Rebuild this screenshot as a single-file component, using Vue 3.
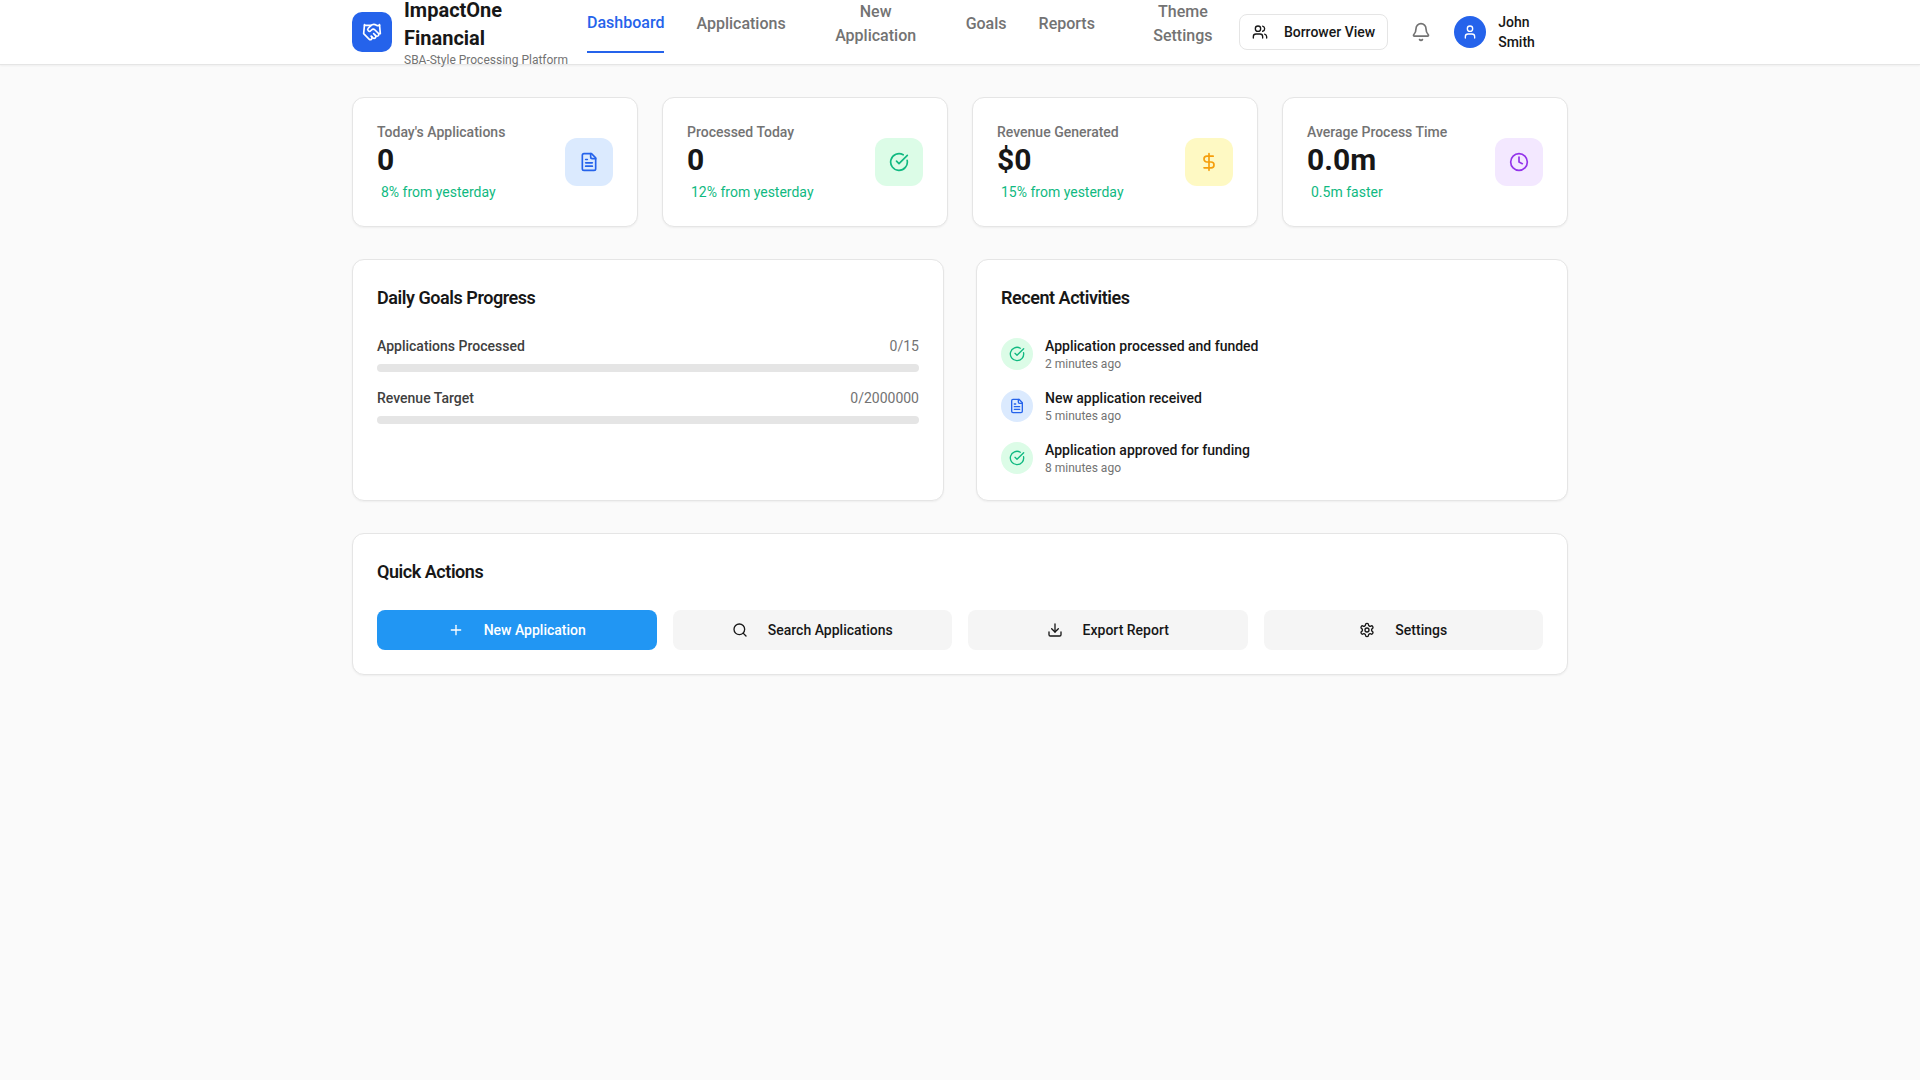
<script setup>
const navItems = [
  { label: 'Dashboard', active: true },
  { label: 'Applications' },
  { label: 'New Application', w: 116 },
  { label: 'Goals' },
  { label: 'Reports' },
  { label: 'Theme Settings', w: 112 }
]
const stats = [
  { label: "Today's Applications", value: '0', delta: '8% from yesterday', tone: 'blue', icon: 'file' },
  { label: 'Processed Today', value: '0', delta: '12% from yesterday', tone: 'green', icon: 'check' },
  { label: 'Revenue Generated', value: '$0', delta: '15% from yesterday', tone: 'yellow', icon: 'dollar' },
  { label: 'Average Process Time', value: '0.0m', delta: '0.5m faster', tone: 'purple', icon: 'clock' }
]
const goals = [
  { label: 'Applications Processed', value: '0/15' },
  { label: 'Revenue Target', value: '0/2000000' }
]
const activities = [
  { title: 'Application processed and funded', time: '2 minutes ago', tone: 'green', icon: 'check' },
  { title: 'New application received', time: '5 minutes ago', tone: 'blue', icon: 'file' },
  { title: 'Application approved for funding', time: '8 minutes ago', tone: 'green', icon: 'check' }
]
const actions = [
  { label: 'New Application', icon: 'plus', primary: true },
  { label: 'Search Applications', icon: 'search' },
  { label: 'Export Report', icon: 'download' },
  { label: 'Settings', icon: 'settings' }
]
const paths = {
  file: ['M15 2H6a2 2 0 0 0-2 2v16a2 2 0 0 0 2 2h12a2 2 0 0 0 2-2V7Z', 'M14 2v4a2 2 0 0 0 2 2h4', 'M10 9H8', 'M16 13H8', 'M16 17H8'],
  check: ['M21.801 10A10 10 0 1 1 17 3.335', 'm9 11 3 3L22 4'],
  dollar: ['M12 2v20', 'M17 5H9.5a3.5 3.5 0 0 0 0 7h5a3.5 3.5 0 0 1 0 7H6'],
  clock: ['M12 22a10 10 0 1 0 0-20 10 10 0 0 0 0 20Z', 'M12 6v6l4 2'],
  plus: ['M5 12h14', 'M12 5v14'],
  search: ['m21 21-4.34-4.34', 'M11 19a8 8 0 1 0 0-16 8 8 0 0 0 0 16Z'],
  download: ['M12 15V3', 'M21 15v4a2 2 0 0 1-2 2H5a2 2 0 0 1-2-2v-4', 'm7 10 5 5 5-5'],
  settings: ['M12.22 2h-.44a2 2 0 0 0-2 2v.18a2 2 0 0 1-1 1.73l-.43.25a2 2 0 0 1-2 0l-.15-.08a2 2 0 0 0-2.73.73l-.22.38a2 2 0 0 0 .73 2.73l.15.1a2 2 0 0 1 1 1.72v.51a2 2 0 0 1-1 1.74l-.15.09a2 2 0 0 0-.73 2.73l.22.38a2 2 0 0 0 2.73.73l.15-.08a2 2 0 0 1 2 0l.43.25a2 2 0 0 1 1 1.73V20a2 2 0 0 0 2 2h.44a2 2 0 0 0 2-2v-.18a2 2 0 0 1 1-1.73l.43-.25a2 2 0 0 1 2 0l.15.08a2 2 0 0 0 2.73-.73l.22-.39a2 2 0 0 0-.73-2.73l-.15-.08a2 2 0 0 1-1-1.74v-.5a2 2 0 0 1 1-1.74l.15-.09a2 2 0 0 0 .73-2.73l-.22-.38a2 2 0 0 0-2.73-.73l-.15.08a2 2 0 0 1-2 0l-.43-.25a2 2 0 0 1-1-1.73V4a2 2 0 0 0-2-2Z', 'M12 15a3 3 0 1 0 0-6 3 3 0 0 0 0 6Z'],
  users: ['M16 21v-2a4 4 0 0 0-4-4H6a4 4 0 0 0-4 4v2', 'M16 3.128a4 4 0 0 1 0 7.744', 'M22 21v-2a4 4 0 0 0-3-3.87', 'M9 11a4 4 0 1 0 0-8 4 4 0 0 0 0 8Z'],
  bell: ['M10.268 21a2 2 0 0 0 3.464 0', 'M3.262 15.326A1 1 0 0 0 4 17h16a1 1 0 0 0 .74-1.673C19.41 13.956 18 12.499 18 8A6 6 0 0 0 6 8c0 4.499-1.411 5.956-2.738 7.326'],
  user: ['M19 21v-2a4 4 0 0 0-4-4H9a4 4 0 0 0-4 4v2', 'M12 11a4 4 0 1 0 0-8 4 4 0 0 0 0 8Z'],
  logo: ['m11 17 2 2a1 1 0 1 0 3-3', 'm14 14 2.5 2.5a1 1 0 1 0 3-3l-3.88-3.88a3 3 0 0 0-4.24 0l-.88.88a1 1 0 1 1-3-3l2.81-2.81a5.79 5.79 0 0 1 7.06-.87l.47.28a2 2 0 0 0 1.42.25L21 4', 'm21 3 1 11h-2', 'M3 3 2 14l6.5 6.5a1 1 0 1 0 3-3', 'M3 4h8']
}
</script>

<template>
  <div class="page">
    <header class="topbar">
      <div class="topbar-inner">
        <div class="brand">
          <span class="logo">
            <svg class="ic20" viewBox="0 0 24 24"><path v-for="d in paths.logo" :key="d" :d="d" /></svg>
          </span>
          <div class="brand-text">
            <div class="brand-name">ImpactOne Financial</div>
            <div class="brand-sub">SBA-Style Processing Platform</div>
          </div>
        </div>
        <nav class="nav">
          <div
            v-for="item in navItems"
            :key="item.label"
            class="nav-item"
            :class="{ active: item.active }"
            :style="item.w ? { width: item.w + 'px' } : null"
          >{{ item.label }}</div>
        </nav>
        <div class="tools">
          <div class="borrower">
            <svg class="ic16" viewBox="0 0 24 24"><path v-for="d in paths.users" :key="d" :d="d" /></svg>
            <span>Borrower View</span>
          </div>
          <div class="bell">
            <svg class="ic20" viewBox="0 0 24 24"><path v-for="d in paths.bell" :key="d" :d="d" /></svg>
          </div>
          <div class="account">
            <span class="avatar">
              <svg class="ic16" viewBox="0 0 24 24"><path v-for="d in paths.user" :key="d" :d="d" /></svg>
            </span>
            <span class="account-name">John Smith</span>
          </div>
        </div>
      </div>
    </header>

    <main class="main">
      <section class="stats">
        <article v-for="s in stats" :key="s.label" class="card stat">
          <div>
            <div class="stat-label">{{ s.label }}</div>
            <div class="stat-value">{{ s.value }}</div>
            <div class="stat-delta">{{ s.delta }}</div>
          </div>
          <span class="stat-icon" :class="s.tone">
            <svg class="ic20" viewBox="0 0 24 24"><path v-for="d in paths[s.icon]" :key="d" :d="d" /></svg>
          </span>
        </article>
      </section>

      <section class="split">
        <article class="card panel">
          <h2>Daily Goals Progress</h2>
          <div class="goals">
            <div v-for="g in goals" :key="g.label">
              <div class="goal-head">
                <span class="goal-label">{{ g.label }}</span>
                <span class="goal-value">{{ g.value }}</span>
              </div>
              <div class="track"></div>
            </div>
          </div>
        </article>
        <article class="card panel">
          <h2>Recent Activities</h2>
          <div class="activities">
            <div v-for="a in activities" :key="a.title" class="activity">
              <span class="activity-icon" :class="a.tone">
                <svg class="ic16" viewBox="0 0 24 24"><path v-for="d in paths[a.icon]" :key="d" :d="d" /></svg>
              </span>
              <div>
                <div class="activity-title">{{ a.title }}</div>
                <div class="activity-time">{{ a.time }}</div>
              </div>
            </div>
          </div>
        </article>
      </section>

      <section class="card panel">
        <h2>Quick Actions</h2>
        <div class="actions">
          <div v-for="a in actions" :key="a.label" class="action" :class="{ primary: a.primary }">
            <svg class="ic16" viewBox="0 0 24 24"><path v-for="d in paths[a.icon]" :key="d" :d="d" /></svg>
            <span>{{ a.label }}</span>
          </div>
        </div>
      </section>
    </main>
  </div>
</template>

<style>
html, body { margin: 0; background: #fafafa; }
</style>

<style scoped>
.page {
  min-height: 1080px;
  background: #fafafa;
  color: #171717;
  font-family: Roboto, "Liberation Sans", sans-serif;
  font-size: 14px;
  line-height: 20px;
  -webkit-font-smoothing: antialiased;
  font-feature-settings: "rlig" 1, "calt" 1;
}
svg { fill: none; stroke: currentColor; stroke-width: 2; stroke-linecap: round; stroke-linejoin: round; flex: none; display: block; }
.ic16 { width: 16px; height: 16px; }
.ic20 { width: 20px; height: 20px; }

.topbar { background: #fff; border-bottom: 1px solid #e5e5e5; box-shadow: 0 1px 2px rgba(0,0,0,.05); }
.topbar-inner { width: 1216px; height: 64px; margin: 0 auto; display: flex; align-items: center; }
.brand { display: flex; align-items: center; gap: 12px; width: 215px; flex: none; }
.logo { width: 40px; height: 40px; border-radius: 10px; background: #2563eb; color: #fff; display: flex; align-items: center; justify-content: center; flex: none; }
.brand-name { font-size: 20px; line-height: 28px; font-weight: 700; }
.brand-sub { font-size: 12px; line-height: 16px; color: #737373; white-space: nowrap; }
.nav { display: flex; align-items: center; gap: 32px; margin-left: 20px; flex: none; }
.nav-item { font-size: 16px; line-height: 24px; font-weight: 500; color: #737373; padding-bottom: 16px; text-align: center; }
.nav-item.active { color: #2563eb; border-bottom: 2px solid #2563eb; }
.tools { display: flex; align-items: center; gap: 16px; }
.borrower { height: 34px; border: 1px solid #e5e5e5; border-radius: 8px; display: flex; align-items: center; gap: 16px; padding: 0 12px; font-weight: 500; }
.bell { color: #737373; width: 20px; padding: 8px 7px; }
.account { display: flex; align-items: center; gap: 12px; }
.avatar { width: 32px; height: 32px; border-radius: 50%; background: #2563eb; color: #fff; display: flex; align-items: center; justify-content: center; flex: none; }
.account-name { width: 44px; font-weight: 500; }

.main { width: 1216px; margin: 0 auto; padding: 32px 0; display: flex; flex-direction: column; gap: 32px; }
.card { background: #fff; border: 1px solid #e5e5e5; border-radius: 12px; box-shadow: 0 1px 2px rgba(0,0,0,.05); padding: 24px; }
.stats { display: grid; grid-template-columns: repeat(4, 1fr); gap: 24px; }
.stat { display: flex; align-items: center; justify-content: space-between; }
.stat-label { color: #737373; font-weight: 500; }
.stat-value { font-size: 30px; line-height: 36px; font-weight: 700; }
.stat-delta { color: #10b981; margin: 4px 0 0 4px; }
.stat-icon { width: 48px; height: 48px; border-radius: 12px; display: flex; align-items: center; justify-content: center; }
.blue { background: #dbeafe; color: #2563eb; }
.green { background: #dcfce7; color: #10b981; }
.yellow { background: #fef9c3; color: #f59e0b; }
.purple { background: #f3e8ff; color: #9333ea; }

.split { display: grid; grid-template-columns: 1fr 1fr; gap: 32px; }
h2 { margin: 0 0 24px; font-size: 18px; line-height: 28px; font-weight: 600; letter-spacing: -0.45px; }
.goals { display: flex; flex-direction: column; gap: 16px; }
.goal-head { display: flex; justify-content: space-between; margin-bottom: 8px; }
.goal-label { color: #404040; font-weight: 500; }
.goal-value { color: #737373; }
.track { height: 8px; border-radius: 999px; background: #e5e5e5; }
.activities { display: flex; flex-direction: column; gap: 16px; }
.activity { display: flex; align-items: center; gap: 12px; }
.activity-icon { width: 32px; height: 32px; border-radius: 50%; display: flex; align-items: center; justify-content: center; flex: none; }
.activity-title { font-weight: 500; }
.activity-time { font-size: 12px; line-height: 16px; color: #737373; }
.actions { display: grid; grid-template-columns: repeat(4, 1fr); gap: 16px; }
.action { height: 40px; border-radius: 8px; background: #f5f5f5; display: flex; align-items: center; justify-content: center; gap: 20px; font-weight: 500; }
.action.primary { background: #2196f3; color: #fff; }
</style>
